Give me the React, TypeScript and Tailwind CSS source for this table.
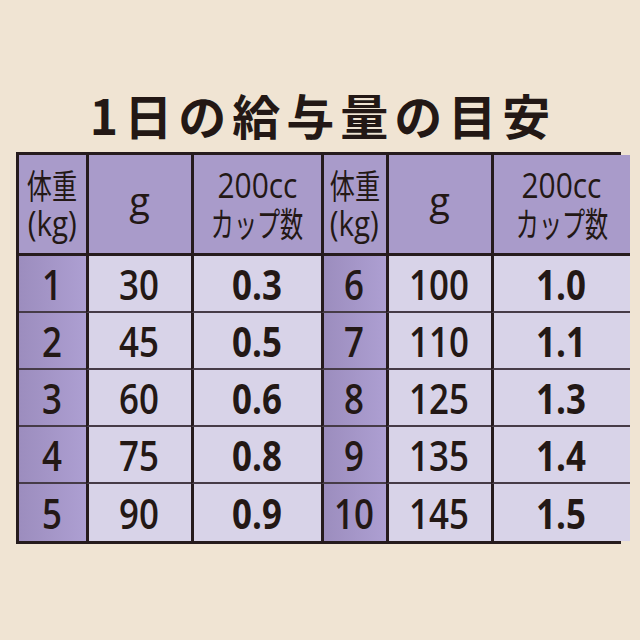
import React from 'react';

const rows = [
  { kg: '1', g: '30', cup: '0.3' },
  { kg: '2', g: '45', cup: '0.5' },
  { kg: '3', g: '60', cup: '0.6' },
  { kg: '4', g: '75', cup: '0.8' },
  { kg: '5', g: '90', cup: '0.9' },
  { kg: '6', g: '100', cup: '1.0' },
  { kg: '7', g: '110', cup: '1.1' },
  { kg: '8', g: '125', cup: '1.3' },
  { kg: '9', g: '135', cup: '1.4' },
  { kg: '10', g: '145', cup: '1.5' },
];

// header: two stacked lines, condensed like the printed table
function HeaderCells({ first }: { first: boolean }) {
  return (
    <>
      <div
        className={`h-[101px] flex flex-col items-center justify-center gap-[4px] bg-[#a99bca] border-b-[3px] border-[#261b1d] ${first ? '' : 'border-l-[3px]'}`}
      >
        <span className="inline-block whitespace-nowrap scale-x-[0.74] text-[34px] leading-[34px] text-[#231815] font-['Noto_Sans_CJK_JP',sans-serif]">体重</span>
        <span className="inline-block whitespace-nowrap scale-x-[0.87] text-[34px] leading-[34px] text-[#231815] font-['Open_Sans','Noto_Sans_CJK_JP',sans-serif]">(kg)</span>
      </div>
      <div className="h-[101px] flex items-center justify-center bg-[#a99bca] border-b-[3px] border-l-[3px] border-[#261b1d]">
        <span className="text-[38px] leading-none pb-[8px] text-[#231815] font-['Open_Sans',sans-serif]">g</span>
      </div>
      <div className="h-[101px] flex flex-col items-center justify-center gap-[4px] bg-[#a99bca] border-b-[3px] border-l-[3px] border-[#261b1d]">
        <span className="inline-block whitespace-nowrap scale-x-[0.88] text-[34px] leading-[34px] text-[#231815] font-['Open_Sans',sans-serif]">200cc</span>
        <span className="inline-block whitespace-nowrap scale-x-[0.68] text-[34px] leading-[34px] text-[#231815] font-['Noto_Sans_CJK_JP',sans-serif]">カップ数</span>
      </div>
    </>
  );
}

function DataCells({ kg, g, cup, first, last }: { kg: string; g: string; cup: string; first: boolean; last: boolean }) {
  const rowLine = last ? '' : 'border-b-2 border-b-[#463b47]';
  return (
    <>
      <div
        className={`h-[57px] flex items-center justify-center bg-gradient-to-r from-[#9c8dbe] to-[#ad9fd2] border-[#261b1d] ${rowLine} ${first ? '' : 'border-l-[3px]'}`}
      >
        <span className="inline-block whitespace-nowrap scale-x-[0.83] text-[42px] leading-none font-semibold text-[#231815] font-['Open_Sans',sans-serif]">{kg}</span>
      </div>
      <div className={`h-[57px] flex items-center justify-center bg-[#d8d3e8] border-l-[3px] border-[#261b1d] ${rowLine}`}>
        <span className="inline-block whitespace-nowrap scale-x-[0.83] text-[42px] leading-none font-semibold text-[#231815] font-['Open_Sans',sans-serif]">{g}</span>
      </div>
      <div className={`h-[57px] flex items-center justify-center bg-[#d8d3e8] border-l-[3px] border-[#261b1d] ${rowLine}`}>
        <span className="inline-block whitespace-nowrap scale-x-[0.83] text-[42px] leading-none font-bold text-[#231815] font-['Open_Sans',sans-serif]">{cup}</span>
      </div>
    </>
  );
}

export default function App() {
  const left = rows.slice(0, 5);
  const right = rows.slice(5);
  return (
    <div className="w-[640px] h-[640px] bg-[#f0e4d3] flex flex-col items-center pt-[84px]">
      <h1 className="text-[48px] leading-[60px] font-bold tracking-[6px] text-[#231815] pl-[6px] font-['Noto_Sans_CJK_JP',sans-serif]">
        1日の給与量の目安
      </h1>
      <div className="mt-[8px] ml-[-4px] w-[605px] border-[3px] border-[#261b1d] grid grid-cols-[67px_105px_130px_65px_105px_1fr]">
        <HeaderCells first={true} />
        <HeaderCells first={false} />
        {left.map((r, i) => (
          <React.Fragment key={r.kg}>
            <DataCells {...r} first={true} last={i === 4} />
            <DataCells {...right[i]} first={false} last={i === 4} />
          </React.Fragment>
        ))}
      </div>
    </div>
  );
}
